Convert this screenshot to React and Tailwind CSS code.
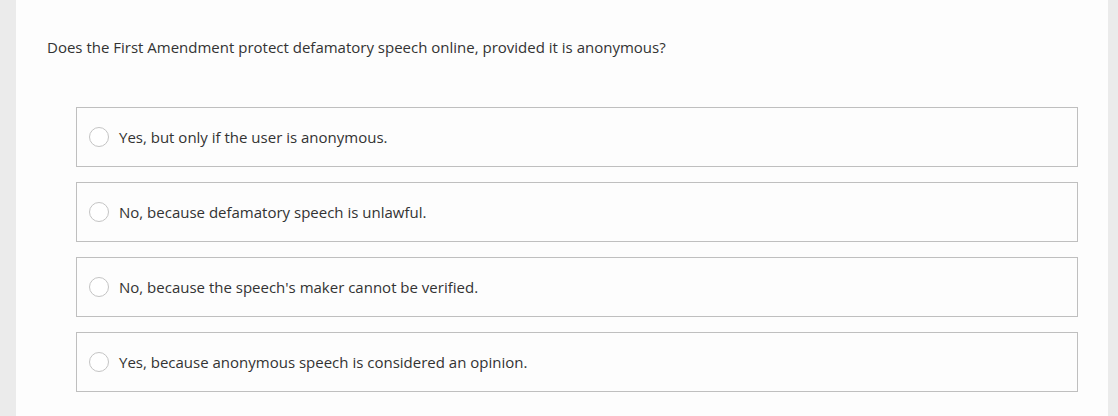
import React from 'react';

const options = [
  "Yes, but only if the user is anonymous.",
  "No, because defamatory speech is unlawful.",
  "No, because the speech's maker cannot be verified.",
  "Yes, because anonymous speech is considered an opinion.",
];

const App = () => {
  return (
    <div
      className="flex h-[416px] w-full bg-[#ebebeb]"
      style={{ fontFamily: '"Open Sans", sans-serif' }}
    >
      <div className="w-[16px] shrink-0" />
      <main className="flex-1 bg-[#fdfdfd] pl-[31px] pr-[30px] pt-[37px]">
        {/* Pergunta */}
        <p className="text-[15px] leading-[20px] text-[#333333]">
          Does the First Amendment protect defamatory speech online, provided it is anonymous?
        </p>

        {/* Alternativas */}
        <ul className="mt-[50px] ml-[29px] flex flex-col gap-[15px]">
          {options.map((text, idx) => (
            <li
              key={idx}
              className="flex h-[60px] items-center border border-[#bfbfbf] bg-[#fdfdfd] pl-[12px]"
            >
              <span className="h-[20px] w-[20px] shrink-0 rounded-full border border-[#c4c4c4] bg-white" />
              <span className="ml-[10px] text-[15px] leading-[20px] text-[#333333]">{text}</span>
            </li>
          ))}
        </ul>
      </main>
      <div className="w-[10px] shrink-0" />
    </div>
  );
};

export default App;
